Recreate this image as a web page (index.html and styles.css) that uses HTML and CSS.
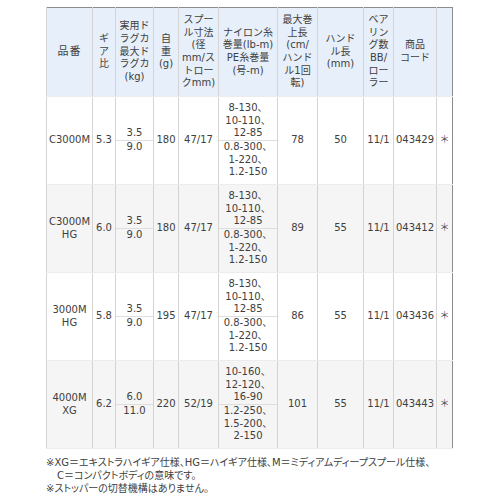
FILE: index.html
```html
<!DOCTYPE html>
<html lang="ja">
<head>
<meta charset="utf-8">
<link rel="stylesheet" href="styles.css">
</head>
<body>
<div class="page">
<table class="spec">
<colgroup>
<col class="c1"><col class="c2"><col class="c3"><col class="c4"><col class="c5"><col class="c6"><col class="c7"><col class="c8"><col class="c9"><col class="c10"><col class="c11">
</colgroup>
<thead>
<tr>
<th><span class="wide">品番</span></th>
<th>ギ<br>ア<br>比</th>
<th>実用ド<br>ラグカ<br>最大ド<br>ラグカ<br>(kg)</th>
<th>自<br>重<br>(g)</th>
<th>スプー<br>ル寸法<br>(径<br>mm/ス<br>トロー<br>クmm)</th>
<th>ナイロン糸<br>巻量(lb-m)<br>PE糸巻量<br>(号-m)</th>
<th>最大巻<br>上長<br>(cm/<br>ハンド<br>ル1回<br>転)</th>
<th>ハンド<br>ル長<br>(mm)</th>
<th>ベア<br>リン<br>グ数<br>BB/<br>ロー<br>ラー</th>
<th>商品<br>コード</th>
<th></th>
</tr>
</thead>
<tbody>
<tr>
<td>C3000M</td>
<td>5.3</td>
<td class="sp"><div class="part">3.5</div><div class="part lower">9.0</div></td>
<td>180</td>
<td>47/17</td>
<td class="sp"><div class="part">8-130、<br>10-110、<br>12-85</div><div class="part lower">0.8-300、<br>1-220、<br>1.2-150</div></td>
<td>78</td>
<td>50</td>
<td>11/1</td>
<td>043429</td>
<td class="mark">＊</td>
</tr>
<tr class="alt">
<td>C3000M<br>HG</td>
<td>6.0</td>
<td class="sp"><div class="part">3.5</div><div class="part lower">9.0</div></td>
<td>180</td>
<td>47/17</td>
<td class="sp"><div class="part">8-130、<br>10-110、<br>12-85</div><div class="part lower">0.8-300、<br>1-220、<br>1.2-150</div></td>
<td>89</td>
<td>55</td>
<td>11/1</td>
<td>043412</td>
<td class="mark">＊</td>
</tr>
<tr>
<td>3000M<br>HG</td>
<td>5.8</td>
<td class="sp"><div class="part">3.5</div><div class="part lower">9.0</div></td>
<td>195</td>
<td>47/17</td>
<td class="sp"><div class="part">8-130、<br>10-110、<br>12-85</div><div class="part lower">0.8-300、<br>1-220、<br>1.2-150</div></td>
<td>86</td>
<td>55</td>
<td>11/1</td>
<td>043436</td>
<td class="mark">＊</td>
</tr>
<tr class="alt">
<td>4000M<br>XG</td>
<td>6.2</td>
<td class="sp"><div class="part">6.0</div><div class="part lower">11.0</div></td>
<td>220</td>
<td>52/19</td>
<td class="sp"><div class="part">10-160、<br>12-120、<br>16-90</div><div class="part lower">1.2-250、<br>1.5-200、<br>2-150</div></td>
<td>101</td>
<td>55</td>
<td>11/1</td>
<td>043443</td>
<td class="mark">＊</td>
</tr>
</tbody>
</table>
<div class="notes">
<p class="note">※XG＝エキストラハイギア仕様、HG＝ハイギア仕様、M＝ミディアムディープスプール仕様、<br>C＝コンパクトボディの意味です。</p>
<p class="note">※ストッパーの切替機構はありません。</p>
</div>
</div>
</body>
</html>
```

FILE: styles.css
```css
html, body {
  margin: 0;
  padding: 0;
  background: #ffffff;
}

.page {
  padding: 7px 0 0 46px;
  font-family: "DejaVu Sans", "Noto Sans CJK JP", sans-serif;
  font-size: 10px;
  color: #404040;
}

.spec {
  border-collapse: collapse;
  table-layout: fixed;
  width: 407px;
  border-top: 1px solid #8c8c8c;
  border-left: 1px solid #8c8c8c;
  border-right: 1px solid #8c8c8c;
}

.c1 { width: 46px; }
.c2 { width: 23px; }
.c3 { width: 38px; }
.c4 { width: 25px; }
.c5 { width: 40px; }
.c6 { width: 59px; }
.c7 { width: 40px; }
.c8 { width: 46px; }
.c9 { width: 30px; }
.c10 { width: 43px; }
.c11 { width: 16px; }

.spec th,
.spec td {
  border-left: 1px solid #d4d4d4;
  border-bottom: 1px solid #ececec;
  text-align: center;
  vertical-align: middle;
  padding: 0;
  line-height: 12.7px;
  white-space: nowrap;
  overflow: hidden;
}

.spec th {
  background: #e6effa;
  font-weight: normal;
  height: 88px;
}

.wide {
  font-size: 11px;
  letter-spacing: 1px;
}

.spec td {
  height: 87px;
  background: #ffffff;
}

.spec tr.alt td {
  background: #f5f5f5;
}

.spec td.sp {
  padding: 0;
}

.part {
  padding: 0;
}

.part.lower {
  border-top: 1px solid #dedede;
}

.mark {
  font-size: 10px;
  color: #555555;
}

.notes {
  margin-top: 7px;
}

.note {
  margin: 0;
  padding-left: 11px;
  text-indent: -11px;
  line-height: 13px;
  font-size: 10px;
  font-feature-settings: "palt";
}
```
